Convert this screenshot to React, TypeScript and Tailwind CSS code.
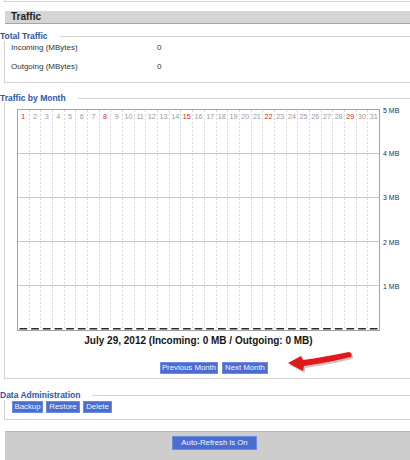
import React from 'react';

const days = Array.from({ length: 31 }, (_, i) => i + 1);
const sundays = [1, 8, 15, 22, 29];
const scale = ['5 MB', '4 MB', '3 MB', '2 MB', '1 MB'];

const Legend = ({ label }: { label: string }) => (
  <div className="flex items-center h-[10px]">
    <span className="text-[8.5px] font-bold text-[#2f55a8] leading-none whitespace-nowrap">{label}</span>
    <div className="flex-1 h-px bg-[#d2d2d2] ml-[12px]" />
  </div>
);

const Btn = ({ label, className = '' }: { label: string; className?: string }) => (
  <button className={`flex items-center justify-center bg-[#4a6dcf] border border-[#6f8bdc] text-[#f4f7ff] text-[7.8px] leading-none ${className}`}>
    {label}
  </button>
);

// monthly traffic plot: 31 day columns, 5 MB scale
const MonthChart = () => {
  const w = 362;
  const cw = w / 31;
  return (
    <svg width={394} height={222} className="block overflow-visible" fontFamily="'Liberation Sans', Arial, sans-serif">
      <rect x={0.5} y={0.5} width={w} height={221} fill="#fff" stroke="#a3a3a3" />
      {[44.5, 88.5, 132.5, 176.5].map(y => (
        <line key={y} x1={1} x2={w} y1={y} y2={y} stroke="#c9c9c9" />
      ))}
      {days.slice(1).map((d, i) => {
        const x = Math.round((i + 1) * cw) + 0.5;
        return <line key={d} x1={x} x2={x} y1={1} y2={221} stroke="#d9d9d9" strokeDasharray="2 2" />;
      })}
      {days.map((d, i) => (
        <text
          key={d}
          x={(i + 0.5) * cw + 0.5}
          y={10}
          fontSize={7.2}
          textAnchor="middle"
          fill={sundays.includes(d) ? '#e01b1b' : '#9a9a9a'}
        >
          {d}
        </text>
      ))}
      {days.map((d, i) => (
        <rect key={d} x={i * cw + 2.5} y={219} width={cw - 4} height={1.5} fill="#2b2b2b" />
      ))}
      {scale.map((s, i) => (
        <text key={s} x={366} y={i === 0 ? 4 : 44.5 * i + 2} fontSize={7} fill="#2c3340">
          {s}
        </text>
      ))}
    </svg>
  );
};

export default function App() {
  return (
    <div className="relative w-[410px] h-[460px] overflow-hidden bg-white text-[#333] font-['Liberation_Sans',Arial,sans-serif]">
      <div className="w-[424px] flex flex-col">
        <div className="ml-[4px] h-[2px] border-l border-b border-[#d2d2d2]" />

        {/* Section header */}
        <div className="mt-[9px] ml-[5px] h-[13px] bg-[#d5d5d5] border-b border-[#a5a5a5] flex items-center pl-[6px] text-[10px] font-bold text-[#1e1e1e] leading-none">
          Traffic
        </div>

        {/* Total Traffic */}
        <div className="mt-[7px]">
          <Legend label="Total Traffic" />
        </div>
        <div className="ml-[4px] border-l border-b border-[#d2d2d2] pl-[6px] pb-[8px] flex flex-col gap-[5px] text-[8px]">
          <div className="flex items-center h-[14px]">
            <span className="w-[146px]">Incoming (MBytes)</span>
            <span>0</span>
          </div>
          <div className="flex items-center h-[14px]">
            <span className="w-[146px]">Outgoing (MBytes)</span>
            <span>0</span>
          </div>
        </div>

        {/* Traffic by Month */}
        <div className="mt-[10px]">
          <Legend label="Traffic by Month" />
        </div>
        <div className="ml-[4px] border-l border-b border-[#d2d2d2] pl-[12px] pt-[6px] pb-[4px] flex flex-col">
          <MonthChart />
          <div className="mt-[2px] h-[14px] w-[363px] flex items-center justify-center text-[10px] font-bold text-[#151515] whitespace-nowrap">
            July 29, 2012 (Incoming: 0 MB / Outgoing: 0 MB)
          </div>
          <div className="mt-[15px] pl-[143px] flex gap-[4px]">
            <Btn label="Previous Month" className="h-[12px] w-[58px]" />
            <Btn label="Next Month" className="h-[12px] w-[46px]" />
          </div>
        </div>

        {/* Data Administration */}
        <div className="mt-[11px]">
          <Legend label="Data Administration" />
        </div>
        <div className="ml-[4px] border-l border-b border-[#d2d2d2] pl-[7px] pt-[1px] pb-[6px] flex gap-[3px]">
          <Btn label="Backup" className="h-[12px] w-[31px]" />
          <Btn label="Restore" className="h-[12px] w-[34px]" />
          <Btn label="Delete" className="h-[12px] w-[29px]" />
        </div>

        {/* Footer bar */}
        <div className="mt-[11px] ml-[5px] h-[40px] bg-[#cdcdcd] border-t border-[#bababa] pt-[4px] flex justify-center">
          <Btn label="Auto-Refresh is On" className="h-[14px] w-[85px]" />
        </div>
      </div>

      {/* red annotation arrow */}
      <svg className="absolute left-[284px] top-[348px]" width={72} height={28}>
        <path
          d="M4 15 L17 8 L19 12 Q40 9 65 4 Q69 5 67 9 Q42 15 20 18 L19 23 Z"
          fill="#000"
          opacity={0.22}
          transform="translate(1.5 2)"
        />
        <path d="M4 15 L17 8 L19 12 Q40 9 65 4 Q69 5 67 9 Q42 15 20 18 L19 23 Z" fill="#e3181b" />
      </svg>
    </div>
  );
}
